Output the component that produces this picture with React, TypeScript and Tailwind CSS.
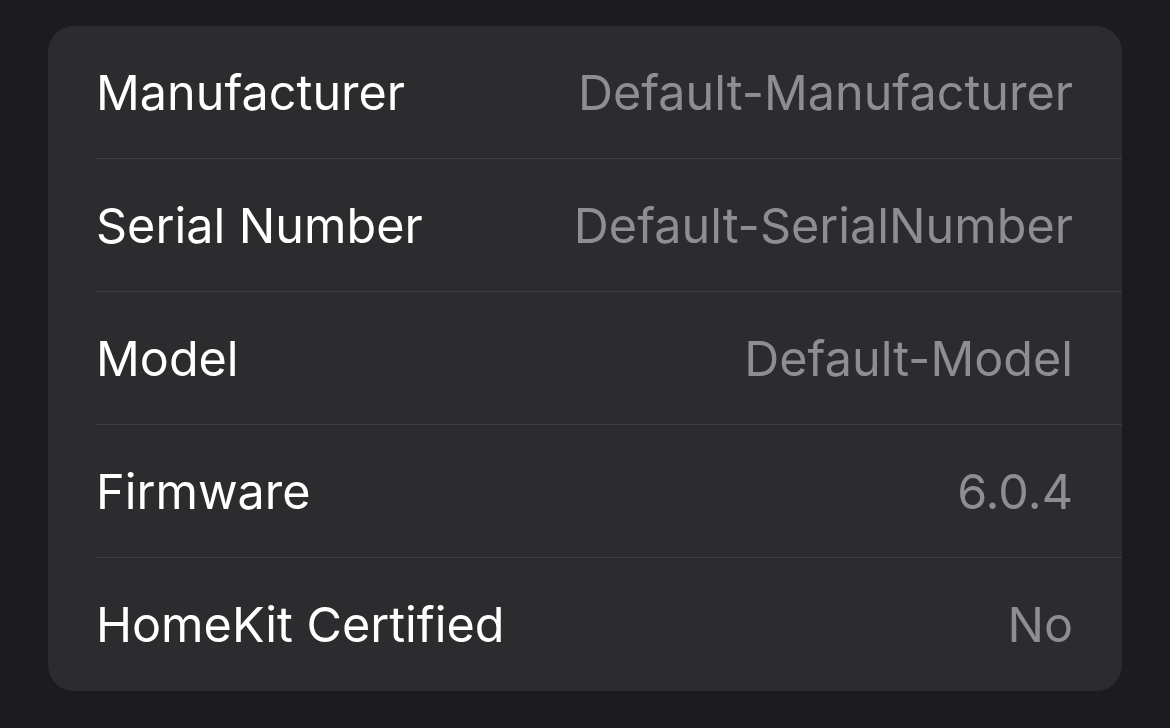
const rows: [string, string][] = [
  ["Manufacturer", "Default-Manufacturer"],
  ["Serial Number", "Default-SerialNumber"],
  ["Model", "Default-Model"],
  ["Firmware", "6.0.4"],
  ["HomeKit Certified", "No"],
];

export default function App() {
  return (
    <div
      className="min-h-screen w-full bg-[#1c1c1e] pt-[26px] pl-[48px] pr-[48px]"
      style={{ fontFamily: "Inter, 'Noto Sans', sans-serif" }}
    >
      <div className="w-[1074px] rounded-[26px] bg-[#2c2c2e] overflow-hidden">
        {rows.map(([label, value], i) => (
          <div key={label} className="pl-[48px]">
            <div
              className={`flex h-[133px] items-center justify-between pr-[49px] ${
                i < rows.length - 1 ? "border-b border-[#3d3d41]" : ""
              }`}
            >
              <span className="text-[48.5px] text-white pt-[2px]">{label}</span>
              <span className="text-[48.5px] text-[#8d8d92] pt-[2px]">{value}</span>
            </div>
          </div>
        ))}
      </div>
    </div>
  );
}
